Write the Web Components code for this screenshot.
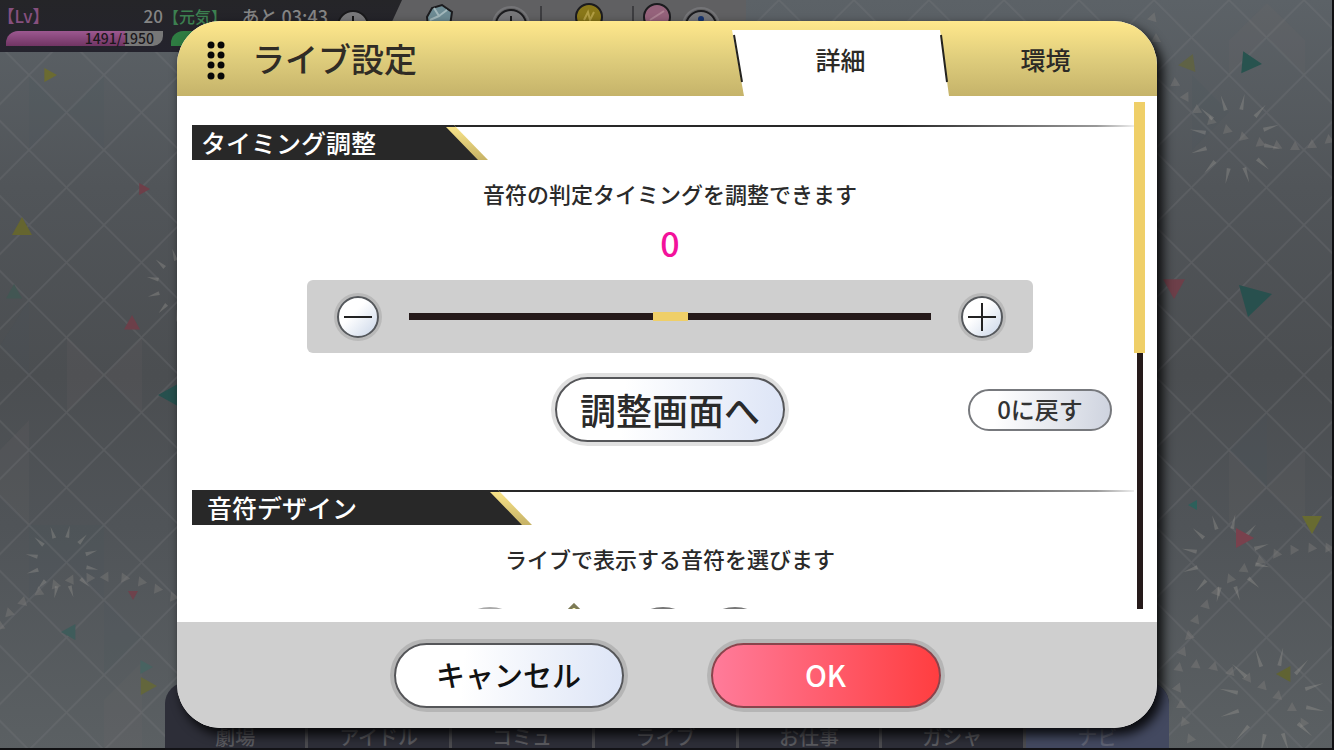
<!DOCTYPE html>
<html lang="ja">
<head>
<meta charset="utf-8">
<meta name="viewport" content="width=device-width, initial-scale=1">
<title>ライブ設定</title>
<style>
html, body { margin: 0; height: 100%; }
body { font-family: "Noto Sans CJK JP", "Noto Sans", sans-serif; font-weight: 500; color: #2a2a2a; background: #4e5256; }
</style>
</head>
<body>
<game-stage>
  <confetti-backdrop slot="backdrop"></confetti-backdrop>
  <status-bar slot="status"></status-bar>
  <main-nav slot="nav"></main-nav>
  <settings-dialog slot="dialog" heading="ライブ設定">
    <button slot="tabs" role="tab" aria-selected="true">詳細</button>
    <button slot="tabs" role="tab" aria-selected="false">環境</button>
    <settings-section style="--label-width: 296px; --label-indent: 9px">
      <span slot="title">タイミング調整</span>
      <span slot="description">音符の判定タイミングを調整できます</span>
      <timing-slider></timing-slider>
    </settings-section>
    <settings-section style="--label-width: 340px; --label-indent: 15px">
      <span slot="title">音符デザイン</span>
      <span slot="description">ライブで表示する音符を選びます</span>
      <note-preview></note-preview>
    </settings-section>
    <pill-button slot="actions">キャンセル</pill-button>
    <pill-button slot="actions" kind="primary">OK</pill-button>
  </settings-dialog>
</game-stage>

<script>
function define(name, html, setup) {
  const template = document.createElement('template');
  template.innerHTML = html;
  customElements.define(name, class extends HTMLElement {
    constructor() {
      super();
      this.attachShadow({ mode: 'open' }).appendChild(template.content.cloneNode(true));
    }
    connectedCallback() { if (setup) setup(this, this.shadowRoot); }
  });
}

define('game-stage', `
<style>
  :host { display: grid; grid-template: 100vh / 1fr; overflow: hidden; }
  ::slotted(*) { grid-area: 1 / 1; min-width: 0; min-height: 0; }
  ::slotted([slot=status]) { align-self: start; }
  ::slotted([slot=nav]) { align-self: end; margin: 0 165px; }
  ::slotted([slot=dialog]) { z-index: 1; margin: 21px 177px 22px; }
</style>
<slot name="backdrop"></slot><slot name="status"></slot><slot name="nav"></slot><slot name="dialog"></slot>`);

/* Backdrop: lattice of diamonds with loose confetti, ray bursts and trails. */
const confetti = [
  [50,75,7,90,'#6b6b31'], [144,189,6,90,'#6e3f49'], [22,227,10,0,'#65652f'], [14,292,8,0,'#425653'],
  [132,323,8,0,'#6c3f49'], [171,395,13,270,'#27504e'], [133,595,5,180,'#6e424c'], [69,632,8,270,'#3f5c5b'],
  [146,667,7,90,'#486361'], [148,686,9,90,'#63663c'], [1187,64,9,262,'#5f6245'], [1251,63,11,95,'#28534f'],
  [1174,288,11,180,'#6d3f49'], [1193,505,5,270,'#2d605b'], [1244,538,10,90,'#79414d'],
  [1312,524,10,180,'#686b31'], [1284,674,8,270,'#606333']
];
const bursts = [[184,285,26,38], [62,562,25,37], [1235,139,30,46], [1226,558,30,45], [1272,700,35,54]];
const trails = [
  [0,625],[9,612],[23,601],[39,591],[55,584],[71,579],[89,577],[106,576],[124,577],[141,581],[157,588],[173,596],
  [1153,17],[1156,38],[1175,82],[1186,96],[1197,109],[1211,120],[1227,129],[1243,136],[1260,142],[1277,145],[1295,146],[1312,144],[1329,139],
  [1328,547],[1311,547],[1293,549],[1276,553],[1260,560],[1244,568],[1230,578],[1217,591],[1206,604],[1196,619],[1189,635],[1183,651],
  [1179,667],[1178,687],[1181,704],[1184,721],[1190,738],[1196,664],[1214,666],[1231,671],[1248,677],[1263,685],[1278,695],[1292,707],[1303,722]
];
define('confetti-backdrop', `
<style>
  :host { display: block; }
  svg { display: block; width: 100%; height: 100%; }
</style>
<svg viewBox="0 0 1334 750" preserveAspectRatio="xMidYMid slice" aria-hidden="true">
  <defs>
    <linearGradient id="sky" x2="0" y2="1">
      <stop offset="0" stop-color="#5c6267"/><stop offset=".25" stop-color="#515559"/><stop offset=".5" stop-color="#4b4e51"/>
      <stop offset=".7" stop-color="#505458"/><stop offset="1" stop-color="#5b6063"/>
    </linearGradient>
    <pattern id="lattice" x="29" y="0" width="75" height="75" patternUnits="userSpaceOnUse">
      <path d="M0 0L75 75M75 0L0 75" stroke="#7d7f80" stroke-opacity=".24" stroke-width="1.6"/>
    </pattern>
  </defs>
  <rect width="1334" height="750" fill="url(#sky)"/>
  <path d="M29 75l37 37 38-37v75l-37-38-38 38zM29 300v75l-29-29zM29 525h75v75l-37-37-38 37zM1192 75v75l37-38zM1229 450l38-37v75zM104 600v75l38-38z" fill="#465460" fill-opacity=".13"/>
  <path d="M67 337v75l37-37 38 37v-75l-38 38zM0 450l29-30v105l-29-30zM1229 450v75l38-37 38 37v-75l-38 38zM1229 40l38-37 38 37v35l-38-38-38 38zM104 700l38-38v88h-38z" fill="#776d70" fill-opacity=".13"/>
  <rect width="1334" height="750" fill="url(#lattice)"/>
  <g id="bits"></g>
  <path d="M1239 285L1272 294L1248 317Z" fill="#28504e"/>
  <path d="M1333 0V750M0 749H1334" stroke="#101012" stroke-width="2"/>
</svg>`, (host, root) => {
  let out = '';
  for (const [x, y] of trails)
    out += `<path d="M0 -5L5 4H-5Z" transform="translate(${x} ${y}) rotate(${(x * 7 + y) % 60 - 30})" fill="#83807f" fill-opacity=".38"/>`;
  for (const [x, y, inner, outer] of bursts)
    for (let i = 0; i < 12; i++)
      out += `<path d="M-2 ${-inner}L0 ${-outer}L2 ${-inner}Z" transform="translate(${x} ${y}) rotate(${i * 30 + 12})" fill="#a5a39d" fill-opacity=".32"/>`;
  for (const [x, y, r, turn, fill] of confetti)
    out += `<path d="M0 ${-r}L${r} ${r * .8}H${-r}Z" transform="translate(${x} ${y}) rotate(${turn})" fill="${fill}"/>`;
  root.getElementById('bits').innerHTML = out;
});

define('status-bar', `
<style>
  :host { display: flex; height: 52px; font-size: 17px; line-height: 24px; font-feature-settings: "halt"; color: #858585; }
  .player { display: flex; gap: 8px; box-sizing: border-box; width: 410px; height: 52px; padding: 4px 0 0 6px; margin-right: -25px; z-index: 1;
    background: linear-gradient(#252528, #24232d); clip-path: polygon(0 0, 402px 0, 378px 52px, 0 52px); }
  .stat { flex: none; width: 157px; }
  .row { display: flex; justify-content: space-between; }
  .lv { color: #86507f; } .vigor { color: #3c8050; font-size: 16px; }
  .meter { height: 15px; margin-top: 3px; padding-right: 9px; border-radius: 12px 0 10px 0; text-align: right; font-size: 14px; line-height: 15px; color: #1b181b;
    background: linear-gradient(90deg, transparent 76%, #777 76%), linear-gradient(#9c5890, #713564); }
  .meter.green { background: #2e7c42; }
  .wallet { width: 361px; height: 26px; background: #606062; border-radius: 0 0 8px 0; }
  svg { display: block; }
  .until { display: flex; gap: 9px; font-size: 18px; }
</style>
<div class="player">
  <div class="stat"><div class="row"><span class="lv">【Lv】</span><span>20</span></div><div class="meter">1491/1950</div></div>
  <div class="stat"><div class="row"><span class="vigor">【元気】</span><span class="until">あと 03:43</span></div><div class="meter green"></div></div>
  <svg width="32" height="40" aria-hidden="true"><circle cx="17" cy="22" r="15" fill="#79797b" stroke="#19191b" stroke-width="2"/><path d="M17 12v20M7 22h20" stroke="#151515" stroke-width="2"/></svg>
</div>
<div class="wallet">
  <svg width="361" height="26" aria-hidden="true">
    <g stroke="#1b1b1e" stroke-width="2">
      <path d="M42 17l5-9 10-3 10 7-2 14H43z" fill="#6d8b94"/>
      <path d="M49 8l5 8-9 4M54 16l8-6" stroke="#a2b7bb" fill="none"/>
      <circle cx="126" cy="25" r="18" fill="none" stroke="#747477"/>
      <circle cx="126" cy="25" r="15" fill="#77777a"/><path d="M126 16v20"/>
      <path d="M156 6v20M248 6v20" stroke-width="1"/>
      <circle cx="204" cy="17" r="13" fill="#897719"/><path d="M199 20l4-8 2 8 4-8" stroke="#b29e44" fill="none"/>
      <circle cx="272" cy="17" r="13" fill="#95627b"/><path d="M265 20l14-9" stroke="#ae8294"/>
      <circle cx="316" cy="26" r="18" fill="none" stroke="#747477"/>
      <circle cx="316" cy="26" r="15" fill="#77777a"/>
    </g>
    <circle cx="316" cy="19" r="3" fill="#17346e"/>
  </svg>
</div>`);

define('main-nav', `
<style>
  :host { display: block; height: 68px; }
  nav { display: grid; grid-template-columns: repeat(7, 1fr); height: 66px; border-radius: 22px 22px 0 0; overflow: hidden;
    background: #2d2e38; border-bottom: 2px solid #121216; }
  a { padding-top: 43px; font-size: 20px; line-height: 24px; text-align: center; text-decoration: none; color: #5b5b60; border-right: 3px solid #4b4b4f; }
  a:last-child { background: #434960; color: #5f6375; border: 0; }
</style>
<nav><a href="#theater">劇場</a><a href="#idol">アイドル</a><a href="#commu">コミュ</a><a href="#live">ライブ</a><a href="#work">お仕事</a><a href="#gacha">ガシャ</a><a href="#navi">ナビ</a></nav>`);

define('settings-dialog', `
<style>
  :host { display: flex; flex-direction: column; overflow: hidden; border-radius: 44px; background: #fff; box-shadow: 5px 6px 11px 1px rgba(0,0,0,.85); }
  header { flex: none; display: flex; height: 75px; background: linear-gradient(#ffe88c, #dfcd7c 50%, #c5b36a); }
  .grip { flex: none; margin: 18px 0 0 28px; }
  h1 { flex: 1; margin: 0 0 0 25px; font-size: 33px; line-height: 74px; font-weight: 500; color: #302c25; }
  .tabs { position: relative; display: grid; grid-template-columns: 217px 193px; padding: 9px 15px 0 0; }
  ::slotted([role=tab]) { border: 0; padding: 0 0 8px; background: none; font: inherit; font-size: 25px; line-height: 30px; color: #2c2a26; }
  ::slotted([role=tab][aria-selected=true]) { background: #fff; clip-path: polygon(0 0, 208px 0, 100% 100%, 12px 100%); }
  .edges { position: absolute; left: 0; bottom: 0; pointer-events: none; }
  .view { flex: 1; min-height: 0; display: flex; padding: 6px 12px 13px 15px; }
  .scroll { flex: 1; min-width: 0; box-sizing: border-box; overflow: hidden auto; scrollbar-width: none; padding-top: 23px; }
  .bar { flex: none; width: 11px; background: linear-gradient(90deg, transparent 3px, #251a1a 3px, #251a1a 9px, transparent 9px); }
  .thumb { height: 251px; background: #efcf68; }
  footer { flex: none; display: flex; justify-content: center; gap: 87px; padding: 21px 0 20px; background: #cfcfcf; }
</style>
<header>
  <svg class="grip" width="22" height="44" aria-hidden="true"><g fill="#080808"><circle cx="6" cy="6" r="3.500"/><circle cx="6" cy="16" r="3.500"/><circle cx="6" cy="26" r="3.500"/><circle cx="6" cy="37" r="3.500"/><circle cx="16" cy="6" r="3.500"/><circle cx="16" cy="16" r="3.500"/><circle cx="16" cy="26" r="3.500"/><circle cx="16" cy="37" r="3.500"/></g></svg>
  <h1></h1>
  <div class="tabs" role="tablist">
    <slot name="tabs"></slot>
    <svg class="edges" width="217" height="66" aria-hidden="true"><path d="M2 5L10 52M209 5L215 52" stroke="#24231f" stroke-width="2"/></svg>
  </div>
</header>
<div class="view">
  <div class="scroll"><slot></slot></div>
  <div class="bar" aria-hidden="true"><div class="thumb"></div></div>
</div>
<footer><slot name="actions"></slot></footer>`, (host, root) => {
  root.querySelector('h1').textContent = host.getAttribute('heading');
});

define('settings-section', `
<style>
  :host { display: block; margin-bottom: 48px; background: linear-gradient(90deg, #282828 75%, #999 96%, #eee) top / 100% 2px no-repeat; }
  h2 { box-sizing: border-box; position: relative; width: var(--label-width); height: 35px; margin: 0; padding-left: var(--label-indent); font-size: 25px; line-height: 34px; font-weight: 500; color: #fff;
    background: linear-gradient(#fbe68a, #c6b266); clip-path: polygon(0 0, calc(100% - 34px) 0, 100% 100%, 0 100%); isolation: isolate; }
  h2::before { content: ""; position: absolute; inset: 0; z-index: -1; background: #282828;
    clip-path: polygon(0 0, 100% 0, 100% 2px, calc(100% - 42px) 2px, calc(100% - 10px) 100%, 0 100%); }
  .body { padding-left: 14px; }
  p { margin: 18px 0 0; padding-bottom: 2px; font-size: 22px; line-height: 30px; text-align: center; }
</style>
<h2><slot name="title"></slot></h2>
<div class="body"><p><slot name="description"></slot></p><slot></slot></div>`);

define('pill-button', `
<style>
  :host { display: block; }
  button { box-sizing: border-box; width: 230px; height: 65px; padding: 0 0 4px; border: 2px solid #555659; border-radius: 33px; box-shadow: 0 0 0 4px rgba(0,0,0,.12);
    background: linear-gradient(95deg, #fff 30%, #dce4f6) border-box; font: inherit; font-size: 29px; color: #111; }
  :host([kind=large]) button { font-size: 36px; padding: 0 0 2px; color: #2a2a2a; }
  :host([kind=primary]) button { background: linear-gradient(90deg, #ff7c9b, #ff3d3f) border-box; border-color: #8a444c; color: #fff; }
  :host([kind=small]) button { width: 144px; height: 42px; padding: 0 0 2px; box-shadow: none; border-color: #77797d; font-size: 24px; line-height: 34px; color: #333;
    background: linear-gradient(95deg, #fff 20%, #cdd2de) border-box; }
</style>
<button type="button"><slot></slot></button>`);

define('timing-slider', `
<style>
  :host { display: block; }
  output { display: block; margin: 13px 0 17px; font-size: 34px; line-height: 40px; text-align: center; color: #f3129b; }
  .panel { display: flex; align-items: center; gap: 30px; box-sizing: border-box; height: 73px; margin: 0 101px; padding: 0 30px; border-radius: 6px; background: #cfcfcf; }
  .panel button { flex: none; width: 42px; height: 42px; padding: 0; border: 2px solid #55585c; border-radius: 50%; box-shadow: 0 0 0 3px #b9b9b9; background: linear-gradient(135deg, #fff 40%, #c5d2e6) border-box; }
  svg { display: block; margin: auto; }
  input { flex: 1; min-width: 0; height: 30px; margin: 0; appearance: none; background: linear-gradient(#251a1a, #251a1a) center / 100% 7px no-repeat; }
  input::-webkit-slider-thumb { appearance: none; width: 35px; height: 9px; border: 0; border-radius: 0; background: #efcf68; }
  .actions { display: grid; grid-template-columns: 1fr auto 1fr; align-items: center; margin-top: 24px; padding: 0 22px; }
  .reset { grid-column: 3; justify-self: end; }
  .open { grid-column: 2; }
</style>
<output>0</output>
<div class="panel">
  <button type="button" id="minus" aria-label="減らす"><svg width="28" height="28"><path d="M0 14H28" stroke="#222" stroke-width="2"/></svg></button>
  <input type="range" min="-50" max="50" value="0" aria-label="タイミング調整">
  <button type="button" id="plus" aria-label="増やす"><svg width="28" height="28"><path d="M0 14H28M14 0V28" stroke="#222" stroke-width="2"/></svg></button>
</div>
<div class="actions">
  <pill-button class="open" kind="large">調整画面へ</pill-button>
  <pill-button class="reset" kind="small">0に戻す</pill-button>
</div>`, (host, root) => {
  const range = root.querySelector('input');
  const show = () => { root.querySelector('output').textContent = range.value; };
  range.addEventListener('input', show);
  root.getElementById('minus').addEventListener('click', () => { range.stepDown(); show(); });
  root.getElementById('plus').addEventListener('click', () => { range.stepUp(); show(); });
  root.querySelector('.reset').addEventListener('click', () => { range.value = 0; show(); });
});

define('note-preview', `
<style>
  :host { display: block; margin-top: 28px; }
  svg { display: block; margin: 0 auto; }
</style>
<svg width="400" height="90" aria-hidden="true">
  <g stroke-width="2">
    <circle cx="20" cy="41" r="36" fill="#e8e8e8" stroke="#aaa"/>
    <path d="M104 2L144 42L104 82L64 42Z" fill="#fbf7b4" stroke="#7c7a55" stroke-width="3"/>
    <circle cx="193" cy="41" r="36" fill="#aaa" stroke="#777"/>
    <circle cx="265" cy="41" r="36" fill="#aaa" stroke="#777"/>
  </g>
</svg>`);
</script>
</body>
</html>
